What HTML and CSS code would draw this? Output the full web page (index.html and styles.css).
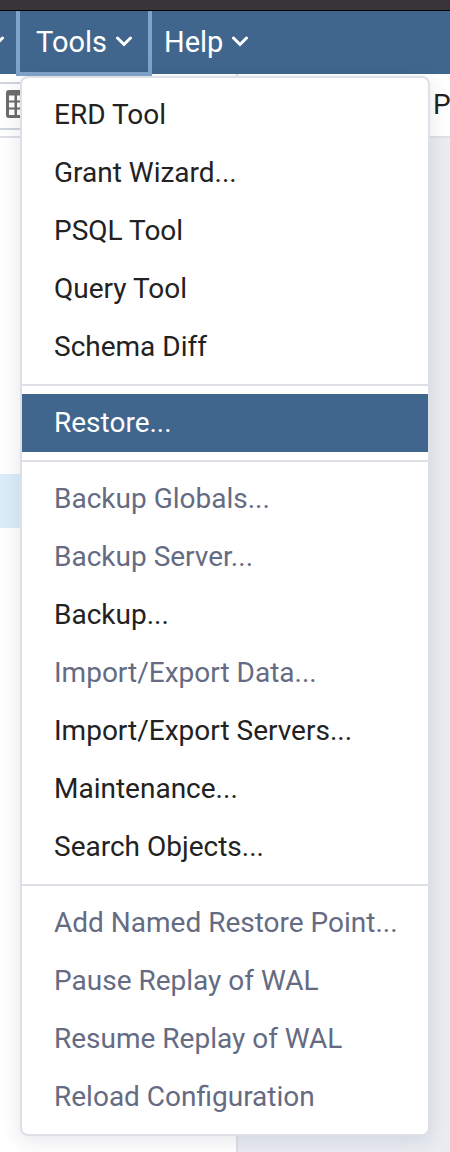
FILE: index.html
```html
<!DOCTYPE html>
<html lang="en">
<head>
<meta charset="utf-8">
<title>Tools menu</title>
<link rel="stylesheet" href="styles.css">
</head>
<body>
<div class="titlebar"></div>
<nav class="menubar">
  <div class="menu-group">
    <button class="menu-button previous" type="button" aria-label="Object"><svg class="chevron" viewBox="0 0 16 12"><path d="M1.500 2 8 8.500 14.500 2"/></svg></button>
  </div>
  <div class="menu-group">
    <button class="menu-button open" type="button" aria-expanded="true">Tools<svg class="chevron" viewBox="0 0 16 12"><path d="M1.500 2 8 8.500 14.500 2"/></svg></button>
    <div class="dropdown" role="menu">
      <button class="item" role="menuitem" type="button">ERD Tool</button>
      <button class="item" role="menuitem" type="button">Grant Wizard...</button>
      <button class="item" role="menuitem" type="button">PSQL Tool</button>
      <button class="item" role="menuitem" type="button">Query Tool</button>
      <button class="item" role="menuitem" type="button">Schema Diff</button>
      <hr class="divider">
      <button class="item active" role="menuitem" type="button">Restore...</button>
      <hr class="divider">
      <button class="item" role="menuitem" type="button" disabled>Backup Globals...</button>
      <button class="item" role="menuitem" type="button" disabled>Backup Server...</button>
      <button class="item" role="menuitem" type="button">Backup...</button>
      <button class="item" role="menuitem" type="button" disabled>Import/Export Data...</button>
      <button class="item" role="menuitem" type="button">Import/Export Servers...</button>
      <button class="item" role="menuitem" type="button">Maintenance...</button>
      <button class="item" role="menuitem" type="button">Search Objects...</button>
      <hr class="divider">
      <button class="item" role="menuitem" type="button" disabled>Add Named Restore Point...</button>
      <button class="item" role="menuitem" type="button" disabled>Pause Replay of WAL</button>
      <button class="item" role="menuitem" type="button" disabled>Resume Replay of WAL</button>
      <button class="item" role="menuitem" type="button" disabled>Reload Configuration</button>
    </div>
  </div>
  <div class="menu-group">
    <button class="menu-button" type="button">Help<svg class="chevron" viewBox="0 0 16 12"><path d="M1.500 2 8 8.500 14.500 2"/></svg></button>
  </div>
</nav>
<main class="workspace">
  <aside class="browser">
    <div class="toolbar">
      <button class="tool" type="button" aria-label="View data">
        <svg class="grid-icon" viewBox="0 0 28 28"><path fill="#6c6c6c" fill-rule="evenodd" d="M3 0H25a3 3 0 0 1 3 3V25a3 3 0 0 1-3 3H3a3 3 0 0 1-3-3V3a3 3 0 0 1 3-3zM3 5.500v5h5.500v-5zM11 5.500v5h6v-5zM19.500 5.500v5H25v-5zM3 12.500v5h5.500v-5zM11 12.500v5h6v-5zM19.500 12.500v5H25v-5zM3 19.500V25h5.500v-5.500zM11 19.500V25h6v-5.500zM19.500 19.500V25H25v-5.500z"/></svg>
      </button>
    </div>
    <div class="tree"><div class="tree-row"></div></div>
  </aside>
  <section class="content">
    <div class="tabs"><button class="tab" type="button">P</button></div>
  </section>
</main>
</body>
</html>
```
FILE: styles.css
```css
* { box-sizing: border-box; }

body {
  margin: 0;
  min-height: 100vh;
  display: flex;
  flex-direction: column;
  overflow: hidden;
  font-family: Roboto, "Liberation Sans", sans-serif;
  font-size: 28px;
  line-height: 42px;
  color: #222;
  background: #fff;
}

button {
  font: inherit;
  color: inherit;
  background: none;
  border: 0;
  padding: 0;
  margin: 0;
}

.titlebar {
  height: 11px;
  background: #373539;
  border-bottom: 1px solid #000;
}

.menubar {
  display: flex;
  height: 63px;
  background: #40668d;
  color: #fff;
}

.menu-group { position: relative; }

.menu-button {
  display: flex;
  align-items: center;
  gap: 9px;
  height: 62px;
  padding: 0 12px;
  font-size: 29px;
}

.menu-button.previous {
  width: 16px;
  padding-left: 0;
  justify-content: flex-end;
}

.menu-button.open {
  position: relative;
  z-index: 1;
  height: 65px;
  padding: 0 16px;
  border: 4px solid #7fa4cb;
  border-top: 0;
}

.chevron {
  width: 16px;
  height: 12px;
  flex: none;
  fill: none;
  stroke: #fff;
  stroke-width: 3;
  stroke-linecap: round;
}

.dropdown {
  position: absolute;
  top: 65px;
  left: 4px;
  z-index: 2;
  width: max-content;
  padding: 8px 0;
  color: #222;
  background: #fff;
  border: 2px solid #dde0e6;
  border-radius: 8px;
  box-shadow: 0 4px 20px rgba(30, 45, 65, 0.12);
}

.item {
  display: block;
  width: 100%;
  padding: 8px 30px 8px 32px;
  text-align: left;
}

.item:disabled { color: #646b82; }

.item.active {
  color: #fff;
  background: #40668d;
}

.divider {
  height: 2px;
  margin: 8px 0;
  border: 0;
  background: #dde0e6;
}

.workspace {
  flex: 1;
  display: flex;
}

.browser {
  flex: 0 0 238px;
  border-right: 2px solid #dde0e6;
}

.toolbar {
  height: 64px;
  padding: 8px 0;
  border-bottom: 2px solid #dde0e6;
}

.tool {
  display: flex;
  align-items: flex-start;
  width: 64px;
  height: 48px;
  margin-left: -6px;
  padding: 6px 10px;
  border: 2px solid #d0d4dd;
  border-radius: 8px;
}

.grid-icon {
  width: 28px;
  height: 28px;
}

.tree { padding-top: 336px; }

.tree-row {
  height: 54px;
  background: #daedf9;
}

.content {
  flex: 1;
  min-width: 0;
  background: #e9edf2;
}

.tabs {
  height: 64px;
  display: flex;
  align-items: center;
  padding-left: 195px;
  overflow: hidden;
  background: #fff;
  border-bottom: 2px solid #dde0e6;
}
```
